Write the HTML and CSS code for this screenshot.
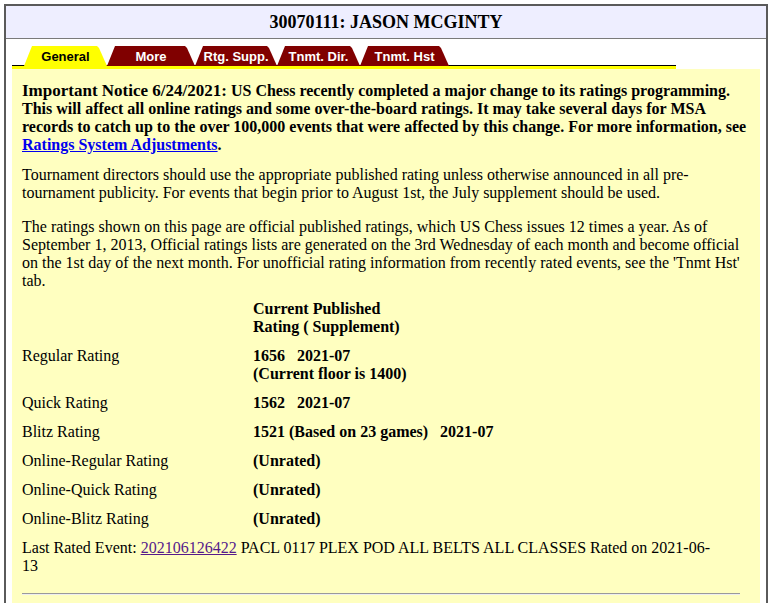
FILE: index.html
```html
<!DOCTYPE html>
<html>
<head>
<meta charset="utf-8">
<link rel="stylesheet" href="styles.css">
</head>
<body>
<div class="frame">
  <div class="title">30070111: JASON MCGINTY</div>
  <div class="inner">
    <div class="tabs">
      <span class="tab tab-active w-general">General</span>
      <span class="tab w-more">More</span>
      <span class="tab w-rtg">Rtg. Supp.</span>
      <span class="tab w-dir">Tnmt. Dir.</span>
      <span class="tab w-hst">Tnmt. Hst</span>
    </div>
    <div class="tabline"></div>
    <div class="panel">
      <p class="notice"><span class="notice-head">Important Notice 6/24/2021:</span> US Chess recently completed a major change to its ratings programming. This will affect all online ratings and some over-the-board ratings. It may take several days for MSA records to catch up to the over 100,000 events that were affected by this change. For more information, see <a class="link" href="#">Ratings System Adjustments</a>.</p>
      <p class="td">Tournament directors should use the appropriate published rating unless otherwise announced in all pre-tournament publicity. For events that begin prior to August 1st, the July supplement should be used.</p>
      <p class="intro">The ratings shown on this page are official published ratings, which US Chess issues 12 times a year. As of September 1, 2013, Official ratings lists are generated on the 3rd Wednesday of each month and become official on the 1st day of the next month. For unofficial rating information from recently rated events, see the 'Tnmt Hst' tab.</p>
      <div class="ratings">
        <div></div><div class="b">Current Published<br>Rating ( Supplement)</div>
        <div>Regular Rating</div><div class="b">1656&nbsp;&nbsp; 2021-07<br>(Current floor is 1400)</div>
        <div>Quick Rating</div><div class="b">1562&nbsp;&nbsp; 2021-07</div>
        <div>Blitz Rating</div><div class="b">1521 (Based on 23 games)&nbsp;&nbsp; 2021-07</div>
        <div>Online-Regular Rating</div><div class="b">(Unrated)</div>
        <div>Online-Quick Rating</div><div class="b">(Unrated)</div>
        <div>Online-Blitz Rating</div><div class="b">(Unrated)</div>
      </div>
      <p class="last">Last Rated Event: <a class="visited" href="#">202106126422</a> PACL 0117 PLEX POD ALL BELTS ALL CLASSES Rated on 2021-06-<wbr>13</p>
      <hr class="rule">
    </div>
  </div>
</div>
</body>
</html>
```
FILE: styles.css
```css
html, body {
  margin: 0;
  padding: 0;
  background: #ffffff;
  height: 605px;
  overflow: hidden;
}
body {
  font-family: "Liberation Serif", "Times New Roman", serif;
  font-size: 16px;
  color: #000;
}
.frame {
  margin: 4px 8px 0 4px;
  border: 2px solid #5a5a5a;
  border-bottom: none;
  height: 599px;
  box-sizing: border-box;
  display: flex;
  flex-direction: column;
  overflow: hidden;
}
.title {
  background: #eeeeff;
  height: 32px;
  line-height: 33px;
  text-align: center;
  font-weight: bold;
  font-size: 18px;
  border-bottom: 1px solid #7a7a7a;
  flex: none;
}
.inner {
  padding: 7px 6px 0 6px;
  flex: 1;
  display: flex;
  flex-direction: column;
}
.tabs {
  display: flex;
  width: 652px;
  height: 20px;
  padding-left: 12px;
  background: linear-gradient(to top, #000 1px, transparent 1px);
  flex: none;
}
.tab {
  display: flex;
  align-items: center;
  justify-content: center;
  height: 20px;
  padding-top: 1px;
  box-sizing: border-box;
  font-family: "Liberation Sans", Arial, sans-serif;
  font-weight: bold;
  font-size: 13px;
  color: #ffffff;
  background: #800000;
  clip-path: polygon(0 100%, 8px 0, calc(100% - 10px) 0, calc(100% - 8px) 2px, 100% 100%);
}
.tab-active {
  background: #ffff00;
  color: #000;
}
.w-general { width: 83px; }
.w-more { width: 88px; }
.w-rtg { width: 82px; }
.w-dir { width: 83px; }
.w-hst { width: 89px; }
.tabline {
  width: 664px;
  height: 3px;
  background: #ffff00;
  flex: none;
}
.panel {
  flex: 1;
  background: #ffffc0;
  padding: 13px 10px 20px 10px;
  line-height: 18px;
}
.panel p {
  margin: 0 0 12px 0;
}
.panel p.td {
  margin-bottom: 16px;
}
.panel p.intro {
  margin-bottom: 10px;
}
.notice {
  font-weight: bold;
}
.notice-head {
  font-size: 17px;
}
.link {
  color: #0000ee;
}
.visited {
  color: #551a8b;
}
.ratings {
  display: grid;
  grid-template-columns: 231px auto;
  row-gap: 11px;
  margin: 0 0 11px 0;
}
.b {
  font-weight: bold;
}
.panel p.last {
  width: 700px;
}
.rule {
  width: 718px;
  margin: 18px 0 0 0;
  border: none;
  border-top: 1px solid #9a9a9a;
  border-bottom: 1px solid #eeeeee;
}
```
